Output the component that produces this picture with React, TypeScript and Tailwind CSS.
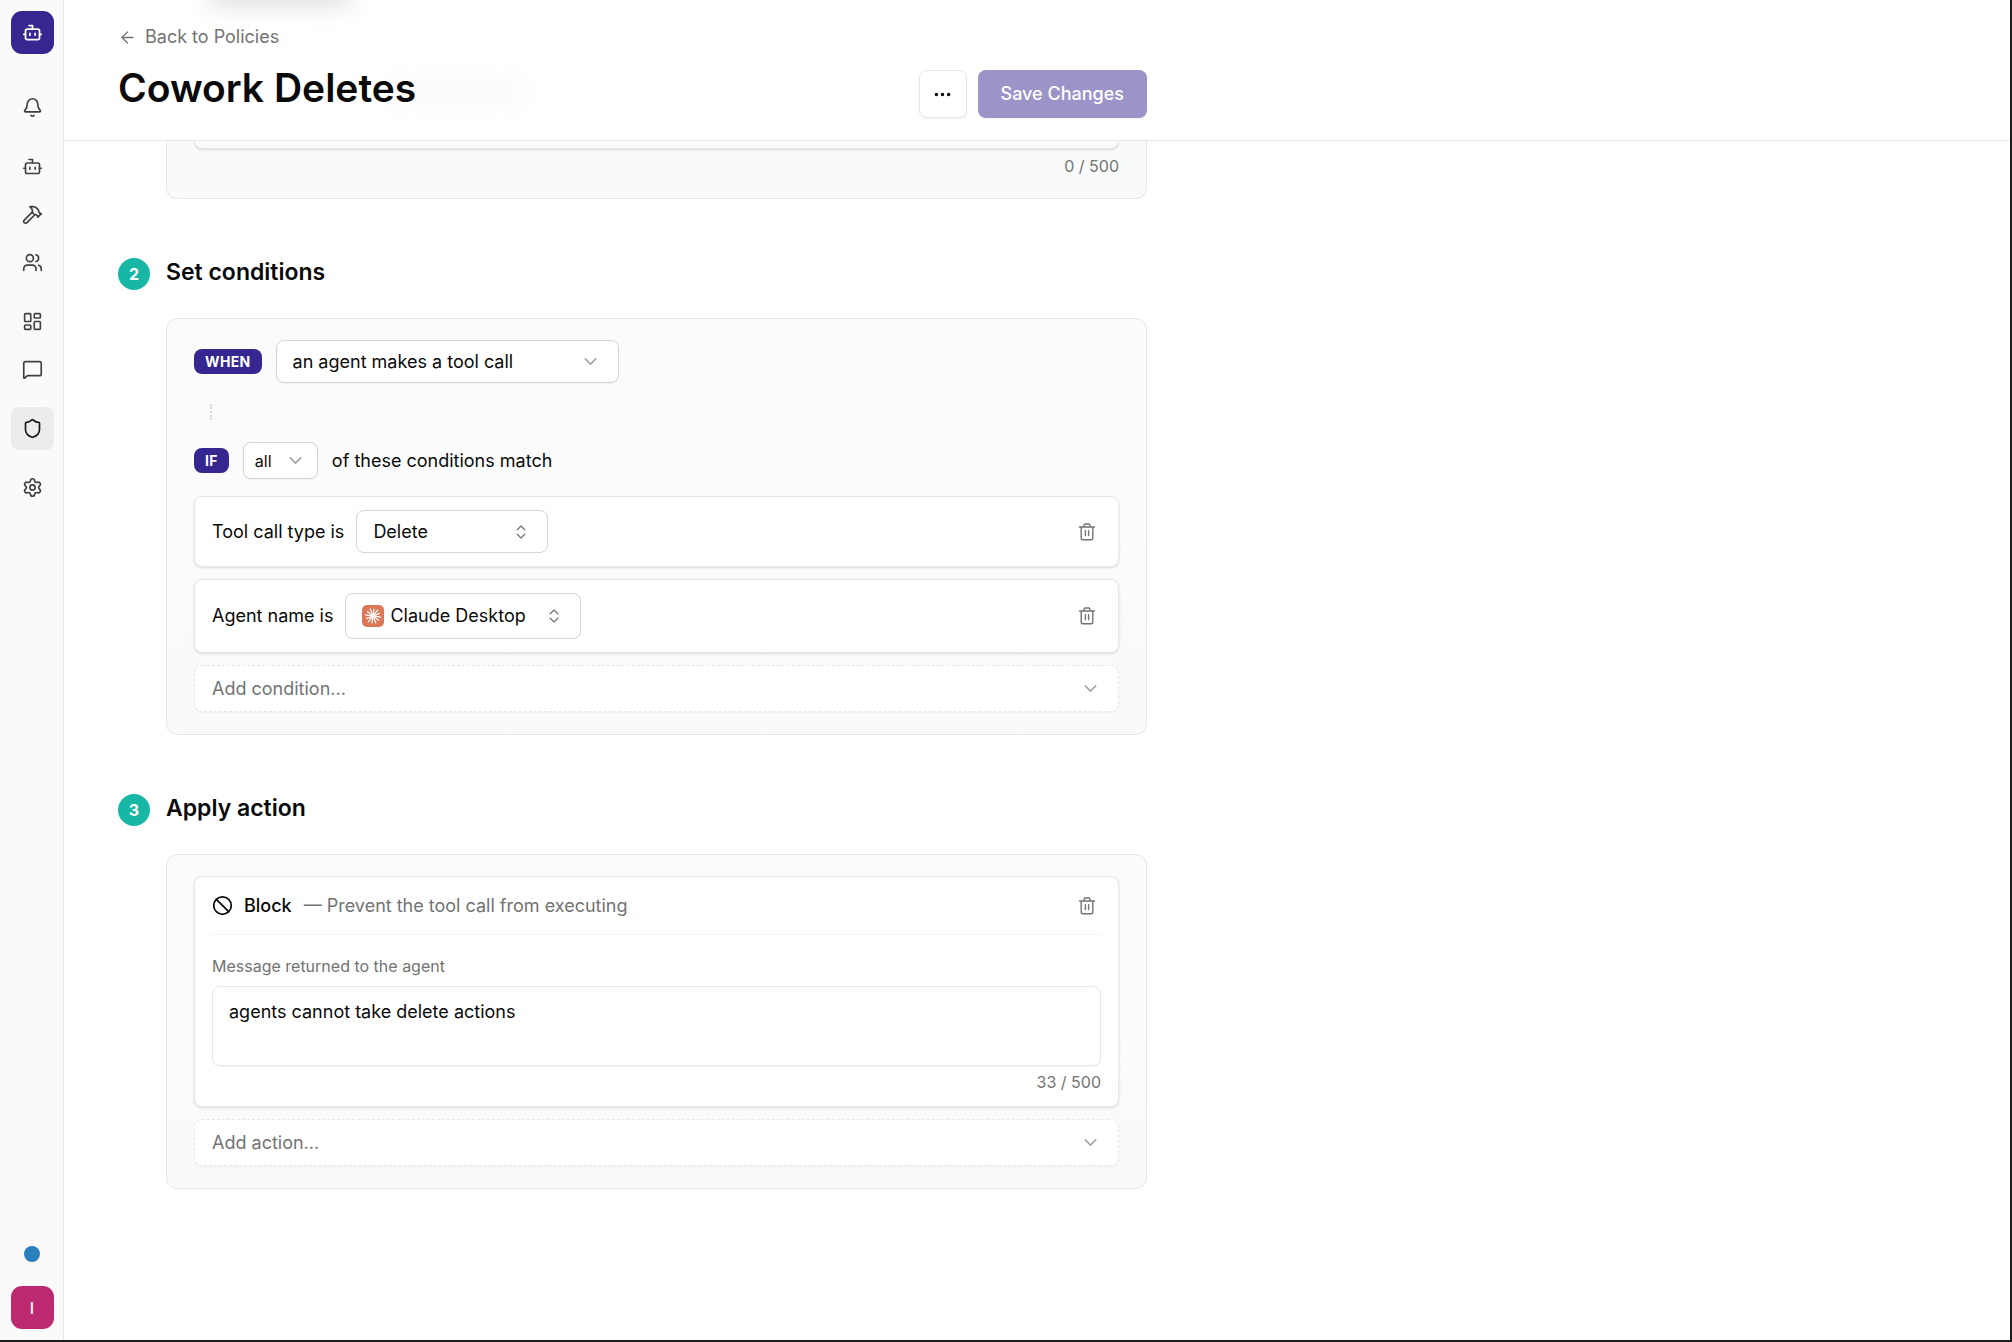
import React, { useState } from "react";
import {
  ArrowLeft,
  Ban,
  Bell,
  Bot,
  ChevronDown,
  ChevronsUpDown,
  Hammer,
  LayoutDashboard,
  MessageSquare,
  MoreHorizontal,
  Settings,
  Shield,
  Users,
  type LucideIcon,
} from "lucide-react";

type NavItem = { label: string; icon: LucideIcon; active?: boolean };

const navGroups: NavItem[][] = [
  [{ label: "Notifications", icon: Bell }],
  [
    { label: "Agents", icon: Bot },
    { label: "Tools", icon: Hammer },
    { label: "Users", icon: Users },
  ],
  [
    { label: "Dashboard", icon: LayoutDashboard },
    { label: "Messages", icon: MessageSquare },
  ],
  [{ label: "Policies", icon: Shield, active: true }],
  [{ label: "Settings", icon: Settings }],
];

function Sidebar() {
  return (
    <aside className="flex w-16 shrink-0 flex-col items-center border-r border-gray-200 bg-[#fafafa] pt-[11px] pb-[11px] pl-px">
      <a
        href="#home"
        aria-label="Home"
        className="flex size-[43px] items-center justify-center rounded-[11px] bg-[#35278f] text-white"
      >
        <Bot size={21} strokeWidth={2} />
      </a>
      <nav className="mt-8 flex flex-col gap-4">
        {navGroups.map((group, i) => (
          <div key={i} className="flex flex-col gap-[5px]">
            {group.map(({ label, icon: Icon, active }) => (
              <a
                key={label}
                href={"#" + label.toLowerCase()}
                aria-label={label}
                className={
                  active
                    ? "flex size-[43px] items-center justify-center rounded-lg bg-[#ebecee] text-neutral-900"
                    : "flex size-[43px] items-center justify-center rounded-lg text-neutral-700"
                }
              >
                <Icon size={21} strokeWidth={1.9} />
              </a>
            ))}
          </div>
        ))}
      </nav>
      <div className="mt-auto flex flex-col items-center gap-6">
        <button type="button" aria-label="Status" className="size-4 rounded-full bg-[#2980bd]" />
        <button
          type="button"
          aria-label="Account"
          className="size-[43px] rounded-[11px] bg-[#bd2971] text-base font-medium text-white"
        >
          I
        </button>
      </div>
    </aside>
  );
}

function TrashButton({ label }: { label: string }) {
  return (
    <button type="button" aria-label={label} className="mr-1 flex size-5 items-center justify-center text-neutral-500">
      <svg viewBox="0 0 20 20" className="size-5" fill="none" stroke="currentColor" strokeWidth="1.4" strokeLinecap="round" strokeLinejoin="round">
        <path d="M2.5 5h15M4.2 5v11.3c0 .9.6 1.5 1.5 1.5h8.6c.9 0 1.5-.6 1.5-1.5V5M7 5V3.4c0-.9.6-1.4 1.4-1.4h3.2c.8 0 1.4.5 1.4 1.4V5M8.4 8.6v5M11.6 8.6v5" />
      </svg>
    </button>
  );
}

function Keyword({ children }: { children: React.ReactNode }) {
  return (
    <span className="flex h-[25px] items-center rounded-lg bg-[#35278f] px-[11px] text-sm font-bold tracking-wide text-white">
      {children}
    </span>
  );
}

function ClaudeMark() {
  const rays = Array.from({ length: 12 }, (_, i) => i * 30 + 8);
  return (
    <svg viewBox="0 0 22 22" className="size-[22px]" aria-hidden="true">
      <rect width="22" height="22" rx="5" fill="#d97757" />
      <g stroke="#fff" strokeWidth="1.2" strokeLinecap="round">
        {rays.map((angle, i) => (
          <line key={angle} x1="11" y1="10" x2="11" y2={i % 2 ? 3.4 : 4} transform={`rotate(${angle} 11 11)`} />
        ))}
      </g>
    </svg>
  );
}

type PickerProps = {
  id: string;
  label?: string;
  value: string;
  className: string;
  stepper?: boolean;
  mark?: React.ReactNode;
  iconClass?: string;
};

function Picker({ id, label, value, className, stepper, mark, iconClass = "right-[18px]" }: PickerProps) {
  const Icon = stepper ? ChevronsUpDown : ChevronDown;
  return (
    <div className="relative">
      {mark && <span className="pointer-events-none absolute inset-y-0 left-[17px] flex items-center">{mark}</span>}
      <select
        id={id}
        aria-label={label}
        className={"block appearance-none rounded-lg border bg-white outline-none " + className}
      >
        <option>{value}</option>
      </select>
      <span className={"pointer-events-none absolute inset-y-0 flex items-center text-neutral-400 " + iconClass}>
        <Icon size={stepper ? 18 : 21} strokeWidth={1.7} className={stepper ? "text-neutral-500" : ""} />
      </span>
    </div>
  );
}

function AddPicker({ id, text }: { id: string; text: string }) {
  return (
    <Picker
      id={id}
      label={text}
      value={text}
      className="h-[47px] w-full border-dashed border-gray-200 pl-[17px] text-neutral-500 shadow-xs"
    />
  );
}

function Step({ number, title, children }: { number: number; title: string; children: React.ReactNode }) {
  return (
    <section className="mt-[59px] grid grid-cols-[32px_minmax(0,1fr)] gap-x-4">
      <span className="flex size-8 items-center justify-center rounded-full bg-[#18b7a5] text-base font-bold text-white">
        {number}
      </span>
      <h2 className="text-[23px] leading-7 font-semibold">{title}</h2>
      <div className="col-start-2 mt-7 rounded-[11px] border border-gray-200 bg-linear-to-b from-[#fbfbfb] to-[#f9fbfa] px-[27px] pt-[21px] pb-[22px]">
        {children}
      </div>
    </section>
  );
}

export default function App() {
  const [message, setMessage] = useState("agents cannot take delete actions");

  return (
    <div className="flex min-h-screen border-r-2 border-b-2 border-[#1a1e1a] bg-white font-['Inter',sans-serif] text-lg text-neutral-950">
      <Sidebar />
      <main className="min-w-0 flex-1">
        <header className="relative overflow-hidden border-b border-gray-200 pt-[25px] pb-[22px] pl-[54px]">
          <div className="absolute -top-5 left-36 h-6 w-36 rounded-full bg-neutral-400/40 blur-md" />
          <div className="absolute top-20 left-80 h-6 w-36 rounded-full bg-neutral-200/20 blur-md" />
          <div className="relative max-w-[1029px]">
            <a href="#policies" className="flex h-6 w-fit items-center gap-2 text-neutral-500">
              <ArrowLeft size={19} strokeWidth={1.6} />
              Back to Policies
            </a>
            <div className="mt-[15px] flex items-start justify-between">
              <h1 className="text-[39px] leading-12 font-semibold">Cowork Deletes</h1>
              <div className="mt-1.5 flex gap-[11px]">
                <button
                  type="button"
                  aria-label="More options"
                  className="flex size-12 items-center justify-center rounded-lg border border-gray-200 bg-white shadow-xs"
                >
                  <MoreHorizontal size={21} strokeWidth={2} />
                </button>
                <button
                  type="button"
                  className="h-12 rounded-lg bg-[#9c93c8] px-[23px] font-medium text-white shadow-xs"
                >
                  Save Changes
                </button>
              </div>
            </div>
          </div>
        </header>

        <div className="max-w-[1083px] pb-[120px] pl-[54px]">
          <div className="ml-12 rounded-b-[11px] border border-t-0 border-gray-200 bg-[#f9fbfa] px-[27px] pb-[22px]">
            <textarea
              aria-label="Description"
              className="block h-2 w-full resize-none overflow-hidden rounded-b-lg border border-t-0 border-gray-200 bg-[#fafbfb] shadow-sm outline-none"
            />
            <p className="mt-[7px] text-right text-base leading-5 text-neutral-500">0 / 500</p>
          </div>

          <Step number={2} title="Set conditions">
            <div className="flex items-center gap-3.5">
              <Keyword>WHEN</Keyword>
              <Picker
                id="trigger"
                label="Trigger"
                value="an agent makes a tool call"
                className="h-[43px] w-[343px] border-gray-300 pl-4 shadow-xs"
              />
            </div>
            <div className="mt-[21px] ml-4 h-4 w-0 border-l-2 border-dotted border-gray-300" />
            <div className="mt-[22px] flex items-center gap-3.5">
              <Keyword>IF</Keyword>
              <Picker
                id="match"
                label="Match mode"
                value="all"
                className="h-[37px] w-[75px] border-gray-300 pl-[11px] text-base shadow-xs"
                iconClass="right-3"
              />
              <span>of these conditions match</span>
            </div>
            <div className="mt-[17px] flex flex-col gap-3">
              <div className="flex h-[71px] items-center gap-3 rounded-lg border border-gray-200 bg-white px-[17px] shadow-sm">
                <label htmlFor="tool-type">Tool call type is</label>
                <Picker id="tool-type" value="Delete" className="h-[43px] w-48 border-gray-300 pl-4" stepper />
                <div className="ml-auto">
                  <TrashButton label="Remove tool call type condition" />
                </div>
              </div>
              <div className="flex h-[74px] items-center gap-3 rounded-lg border border-gray-200 bg-white px-[17px] shadow-sm">
                <label htmlFor="agent-name">Agent name is</label>
                <Picker
                  id="agent-name"
                  value="Claude Desktop"
                  className="h-[46px] w-[236px] border-gray-300 pl-11"
                  stepper
                  mark={<ClaudeMark />}
                />
                <div className="ml-auto">
                  <TrashButton label="Remove agent name condition" />
                </div>
              </div>
              <AddPicker id="add-condition" text="Add condition..." />
            </div>
          </Step>

          <Step number={3} title="Apply action">
            <div className="flex flex-col gap-3">
              <div className="rounded-lg border border-gray-200 bg-white px-[17px] pb-[14px] shadow-sm">
                <div className="flex h-[58px] items-center border-b border-gray-100">
                  <Ban size={21} strokeWidth={2} />
                  <h3 className="ml-[11px] font-medium">Block</h3>
                  <p className="ml-3 text-neutral-500">— Prevent the tool call from executing</p>
                  <div className="ml-auto">
                    <TrashButton label="Remove block action" />
                  </div>
                </div>
                <label htmlFor="message" className="mt-[21px] block text-base leading-5 text-neutral-500">
                  Message returned to the agent
                </label>
                <textarea
                  id="message"
                  value={message}
                  maxLength={500}
                  onChange={(e) => setMessage(e.target.value)}
                  className="mt-2.5 block h-20 w-full resize-none rounded-lg border border-gray-200 px-4 py-[11px] leading-7 shadow-xs outline-none"
                />
                <p className="mt-1.5 text-right text-base leading-5 text-neutral-500">{message.length} / 500</p>
              </div>
              <AddPicker id="add-action" text="Add action..." />
            </div>
          </Step>
        </div>
      </main>
    </div>
  );
}
